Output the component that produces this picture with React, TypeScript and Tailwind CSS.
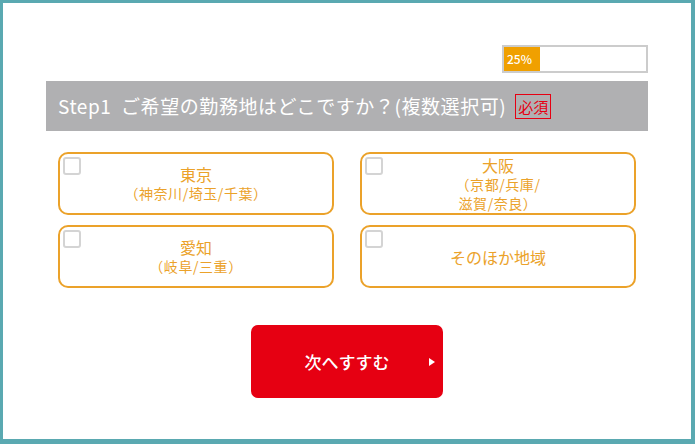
import { useState } from 'react'

interface Area {
  id: string
  name: string
  sub?: React.ReactNode
}

const AREAS: Area[] = [
  { id: 'tokyo', name: '東京', sub: '（神奈川/埼玉/千葉）' },
  {
    id: 'osaka',
    name: '大阪',
    sub: (
      <>
        （京都/兵庫/
        <br />
        滋賀/奈良）
      </>
    ),
  },
  { id: 'aichi', name: '愛知', sub: '（岐阜/三重）' },
  { id: 'other', name: 'そのほか地域' },
]

const FONT = { fontFamily: '"Noto Sans CJK JP", "Noto Sans", sans-serif' }

export default function App() {
  const [checked, setChecked] = useState<Record<string, boolean>>({})

  return (
    <div
      className="w-[695px] h-[444px] bg-[#5aa9b1] pt-[3px] pl-[3px] pr-[4px] pb-[5px]"
      style={FONT}
    >
      <div className="w-full h-full bg-white flex flex-col">
        {/* Progress */}
        <div className="flex justify-end pr-[43px] pt-[42px]">
          <div className="w-[146px] h-[28px] border-2 border-[#cccccc] bg-white flex">
            <div className="w-[36px] h-full bg-[#f0a000] flex items-center pl-[3px] text-white text-[12px] font-medium">
              25%
            </div>
          </div>
        </div>

        {/* Question header */}
        <div className="mx-[43px] mt-[8px] h-[50px] bg-[#b0b0b2] flex items-center pl-[12px] text-white text-[19px] tracking-[0.03em]">
          <span>Step1&nbsp;&nbsp;ご希望の勤務地はどこですか？(複数選択可)</span>
          <span className="ml-[9px] border border-[#e60012] text-[#e60012] text-[15px] tracking-normal leading-none px-[2px] py-[4px]">
            必須
          </span>
        </div>

        {/* Options */}
        <div className="grid grid-cols-2 gap-x-[26px] gap-y-[10px] px-[55px] mt-[21px]">
          {AREAS.map((a) => (
            <button
              key={a.id}
              onClick={() => setChecked({ ...checked, [a.id]: !checked[a.id] })}
              className="relative h-[63px] border-2 border-[#eba22a] rounded-[10px] bg-white flex flex-col items-center justify-center text-[#eba22a]"
            >
              <span
                className={`absolute left-[3px] top-[3px] w-[18px] h-[18px] rounded-[3px] border-2 border-[#d4d4d4] ${
                  checked[a.id] ? 'bg-[#eba22a]' : 'bg-white'
                }`}
              />
              <span className="text-[16px] leading-[20px]">{a.name}</span>
              {a.sub && (
                <span className="text-[14px] leading-[19px] tracking-[0.04em]">{a.sub}</span>
              )}
            </button>
          ))}
        </div>

        {/* Next */}
        <div className="flex justify-center mt-[37px]">
          <button className="relative w-[192px] h-[73px] bg-[#e60012] rounded-[7px] text-white text-[17px] font-medium flex items-center justify-center">
            次へすすむ
            <span className="absolute right-[8px] top-1/2 -translate-y-1/2 w-0 h-0 border-y-[4px] border-y-transparent border-l-[6px] border-l-white" />
          </button>
        </div>
      </div>
    </div>
  )
}
